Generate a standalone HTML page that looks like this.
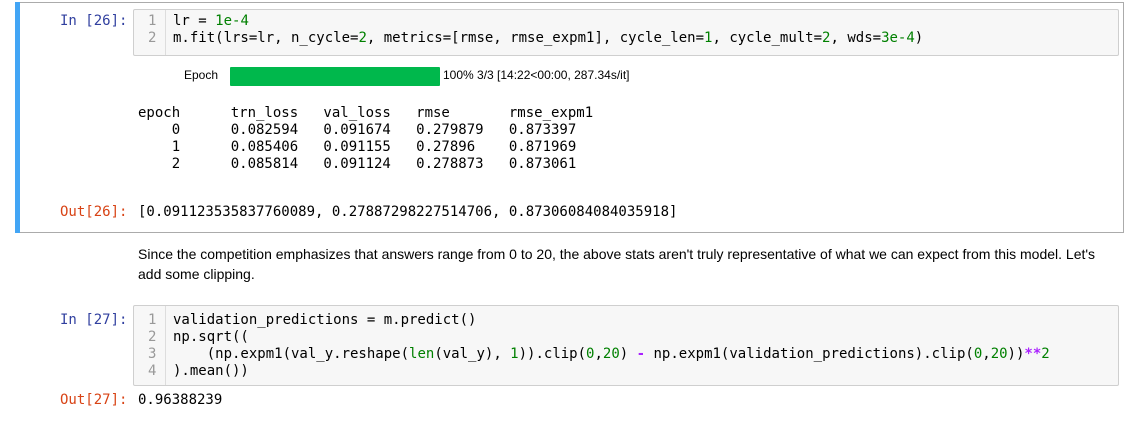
<!DOCTYPE html>
<html><head><style>
body{margin:0;width:1136px;height:443px;background:#fff;position:relative;overflow:hidden;font-family:"DejaVu Sans Mono","Liberation Mono",monospace;font-size:14px;color:#000}
.a{position:absolute;white-space:pre;line-height:17px}
.in{color:#303f9f}.out{color:#d84315}
.g{color:#008000}.p{color:#aa22ff;font-weight:bold}.ln{color:#999}
.box{position:absolute;background:#f7f7f7;border:1px solid #cfcfcf;border-radius:2px}
.sans{font-family:"Liberation Sans",Arial,sans-serif;font-size:14px}
</style></head><body>
<div style="position:absolute;left:15px;top:2px;width:1108px;height:229px;border:1px solid #ababab;border-left:none"></div>
<div style="position:absolute;left:15px;top:2px;width:5px;height:231px;background:#42a5f5"></div>
<div class="box" style="left:133px;top:9px;width:984px;height:45px"></div>
<div style="position:absolute;left:165px;top:10px;width:1px;height:45px;background:#ddd"></div>
<div class="a in" style="left:60px;top:13px">In [26]:</div>
<div class="a ln" style="left:148px;top:13px">1
2</div>
<div class="a" style="left:173px;top:13px">lr = <span class="g">1e-4</span>
m.fit(lrs=lr, n_cycle=<span class="g">2</span>, metrics=[rmse, rmse_expm1], cycle_len=<span class="g">1</span>, cycle_mult=<span class="g">2</span>, wds=<span class="g">3e-4</span>)</div>
<div class="a sans" style="left:184px;top:67px;font-size:12px">Epoch</div>
<div style="position:absolute;left:230px;top:67px;width:210px;height:19px;background:#00b84c;border-radius:1px"></div>
<div class="a sans" style="left:443px;top:67px;font-size:12px">100% 3/3 [14:22&lt;00:00, 287.34s/it]</div>
<div class="a" style="left:138px;top:105px">epoch      trn_loss   val_loss   rmse       rmse_expm1 
    0      0.082594   0.091674   0.279879   0.873397   
    1      0.085406   0.091155   0.27896    0.871969   
    2      0.085814   0.091124   0.278873   0.873061</div>
<div class="a out" style="left:60px;top:204px">Out[26]:</div>
<div class="a" style="left:138px;top:204px">[0.091123535837760089, 0.27887298227514706, 0.87306084084035918]</div>
<div class="a sans" style="left:138px;top:245px;line-height:19.5px">Since the competition emphasizes that answers range from 0 to 20, the above stats aren't truly representative of what we can expect from this model. Let's
add some clipping.</div>
<div class="box" style="left:133px;top:305px;width:984px;height:79px"></div>
<div style="position:absolute;left:165px;top:306px;width:1px;height:79px;background:#ddd"></div>
<div class="a in" style="left:60px;top:312px">In [27]:</div>
<div class="a ln" style="left:148px;top:312px">1
2
3
4</div>
<div class="a" style="left:173px;top:312px">validation_predictions = m.predict()
np.sqrt((
    (np.expm1(val_y.reshape(<span class="g">len</span>(val_y), <span class="g">1</span>)).clip(<span class="g">0</span>,<span class="g">20</span>) <span class="p">-</span> np.expm1(validation_predictions).clip(<span class="g">0</span>,<span class="g">20</span>))<span class="p">**</span><span class="g">2</span>
).mean())</div>
<div class="a out" style="left:60px;top:392px">Out[27]:</div>
<div class="a" style="left:138px;top:392px">0.96388239</div>
</body></html>
